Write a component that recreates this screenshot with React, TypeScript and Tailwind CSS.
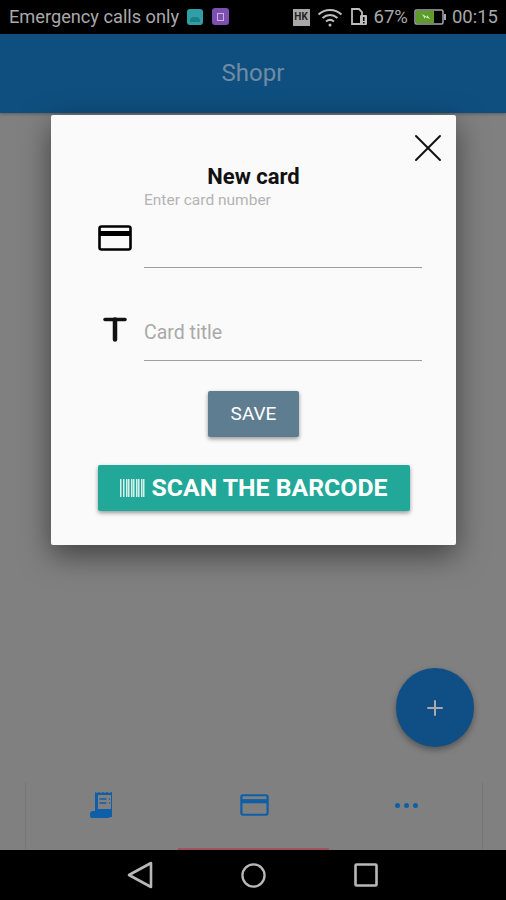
import { Plus, X } from "lucide-react";

const font = { fontFamily: "Roboto, sans-serif" };

function CardIcon({ className }: { className: string }) {
  return (
    <svg viewBox="0 0 34 26" className={className} fill="none">
      <rect x="1.5" y="1.5" width="31" height="23" rx="2" stroke="currentColor" strokeWidth="2.6" />
      <rect x="1.5" y="6" width="31" height="5" fill="currentColor" />
    </svg>
  );
}

function TitleIcon() {
  return (
    <svg viewBox="0 0 24 26" className="mb-[19px] ml-[6px] h-[26px] w-[24px] text-[#111]" fill="none">
      <path d="M2 3.500h20" stroke="currentColor" strokeWidth="3.500" strokeLinecap="round" />
      <path d="M12 3.500v20" stroke="currentColor" strokeWidth="4.500" strokeLinecap="round" />
    </svg>
  );
}

function ReceiptIcon() {
  return (
    <svg viewBox="0 0 26 28" className="h-[28px] w-[26px] text-[#0f5ea8]" fill="none">
      <path d="M6 1l2 1 2-1 2 1 2-1 2 1 2-1 2 1 3-1v25h-4v-5H6z M9 7v11h13V4H9z" fill="currentColor" fillRule="evenodd" />
      <path d="M1 23c0-2 1-3 3-3h15v4c0 2 1 3 3 3H3c-1 0-2-1-2-2z" fill="currentColor" />
      <path d="M10.500 8h7M10.500 12h7M20 8h1M20 12h1" stroke="currentColor" strokeWidth="1.600" />
    </svg>
  );
}

function BatteryIcon() {
  return (
    <svg viewBox="0 0 32 16" className="h-[16px] w-[32px]" fill="none">
      <rect x="1" y="1" width="28" height="14" rx="1.500" stroke="#a8a8a8" strokeWidth="1.500" />
      <rect x="2" y="2" width="18" height="12" fill="#5d9c28" />
      <path d="M8 5l5 3 0-2 3 4-5-2 0 2z" fill="#dfe8d4" />
      <rect x="30" y="5" width="2" height="6" fill="#a8a8a8" />
    </svg>
  );
}

function WifiIcon() {
  return (
    <svg viewBox="0 0 26 20" className="h-[20px] w-[26px]" fill="none" stroke="#bdbdbd" strokeWidth="2">
      <path d="M1.500 7.500c6.500-6 16.500-6 23 0" />
      <path d="M5.500 11c4.500-4 10.500-4 15 0" />
      <path d="M9 14.500c2.500-2 5.500-2 8 0" />
      <circle cx="13" cy="18" r="1.500" fill="#bdbdbd" stroke="none" />
    </svg>
  );
}

function SimIcon() {
  return (
    <svg viewBox="0 0 18 18" className="h-[18px] w-[18px]" fill="none">
      <path d="M2 1h7l3 3v12H2z" stroke="#bdbdbd" strokeWidth="1.800" />
      <rect x="10" y="7" width="7" height="10" rx="1" fill="#bdbdbd" />
      <rect x="13" y="9" width="1.500" height="4" fill="#000" />
      <rect x="13" y="14" width="1.500" height="1.500" fill="#000" />
    </svg>
  );
}

function StatusBar() {
  return (
    <div className="flex h-[34px] items-center justify-between bg-black pl-[9px] pr-[8px] text-[#a9a9a9]">
      <div className="flex items-center">
        <span className="text-[18.2px] leading-none">Emergency calls only</span>
        <div className="ml-[8px] flex h-[16px] w-[16px] items-end justify-center rounded-[3px] bg-[#2f9ea6]">
          <div className="mb-[3px] h-[5px] w-[10px] rounded-t-[4px] bg-[#1f7f86]" />
        </div>
        <div className="ml-[9px] flex h-[17px] w-[17px] items-center justify-center rounded-[3px] bg-[#7d4fb0]">
          <div className="h-[8px] w-[7px] border border-[#c9b3e0]" />
        </div>
      </div>
      <div className="flex items-center">
        <div className="flex h-[17px] w-[17px] items-center justify-center bg-[#a8a8a8] text-[10px] font-bold leading-none text-[#222]">
          HK
        </div>
        <div className="ml-[7px]">
          <WifiIcon />
        </div>
        <div className="ml-[7px]">
          <SimIcon />
        </div>
        <span className="ml-[6px] text-[18.5px] leading-none">67%</span>
        <div className="ml-[6px]">
          <BatteryIcon />
        </div>
        <span className="ml-[6px] text-[18.5px] leading-none">00:15</span>
      </div>
    </div>
  );
}

function Field({ icon, label, small }: { icon: React.ReactNode; label: string; small?: boolean }) {
  return (
    <div className="flex">
      <div className="flex w-[47px] items-end justify-start">{icon}</div>
      <div className="w-[278px] border-b border-[#9e9e9e]">
        {small ? (
          <div className="h-[76px] pt-[1px] text-[15.5px] leading-[16px] text-[#b4b4b4]">{label}</div>
        ) : (
          <div className="flex h-[58px] items-center pt-[3px] text-[19.5px] text-[#a9a9a9]">{label}</div>
        )}
      </div>
    </div>
  );
}

function NewCardModal() {
  return (
    <div className="absolute left-[51px] top-[81px] flex h-[430px] w-[405px] flex-col items-center rounded-[2px] bg-[#fafafa] shadow-[0_10px_30px_rgba(0,0,0,0.5)]">
      <X className="absolute right-[4px] top-[9px] h-[48px] w-[48px] text-[#111]" strokeWidth={1} />
      <h2 className="mt-[49px] text-[22px] font-bold leading-[26px] text-[#111]">New card</h2>
      <div className="mt-[1px] flex w-full flex-col gap-[34px] pl-[46px]">
        <Field
          small
          label="Enter card number"
          icon={<CardIcon className="mb-[17px] ml-[1px] h-[26px] w-[34px] text-black" />}
        />
        <Field label="Card title" icon={<TitleIcon />} />
      </div>
      <button className="mt-[30px] flex h-[46px] w-[91px] items-center justify-center rounded-[2px] bg-[#5f7d90] text-[19px] text-white shadow-[0_2px_4px_rgba(0,0,0,0.4)]">
        SAVE
      </button>
      <button className="mt-[28px] flex h-[46px] w-[312px] items-center justify-center rounded-[2px] bg-[#22a899] text-[24.8px] font-bold text-white shadow-[0_2px_4px_rgba(0,0,0,0.4)]">
        <svg viewBox="0 0 25 18" className="mr-[7px] h-[18px] w-[25px]">
          {[0, 3, 6, 8, 11, 13, 16, 18, 21, 23].map((x) => (
            <rect key={x} x={x} y="0" width="1.500" height="18" fill="#d7efeb" />
          ))}
        </svg>
        SCAN THE BARCODE
      </button>
    </div>
  );
}

function BottomNav() {
  return (
    <div className="relative ml-[25px] mr-[23px] flex h-[68px] border-x border-[#777] bg-[#808080] pt-[9px]">
      <div className="flex h-[28px] flex-1 items-center justify-center">
        <ReceiptIcon />
      </div>
      <div className="flex h-[28px] flex-1 items-center justify-center">
        <CardIcon className="h-[22px] w-[29px] text-[#0f5ea8]" />
      </div>
      <div className="flex h-[28px] flex-1 items-center justify-center gap-[4px]">
        <div className="h-[5px] w-[5px] rounded-full bg-[#0f5ea8]" />
        <div className="h-[5px] w-[5px] rounded-full bg-[#0f5ea8]" />
        <div className="h-[5px] w-[5px] rounded-full bg-[#0f5ea8]" />
      </div>
      <div className="absolute bottom-0 left-[152px] h-[2px] w-[151px] bg-[#a0525f]" />
    </div>
  );
}

function NavBar() {
  return (
    <div className="flex h-[50px] items-center justify-center gap-[88px] bg-black pr-[1px]">
      <svg viewBox="0 0 26 28" className="h-[28px] w-[26px]" fill="none">
        <path d="M24 2v24L2 14z" stroke="#b8b8b8" strokeWidth="2.600" strokeLinejoin="round" />
      </svg>
      <svg viewBox="0 0 26 26" className="h-[25px] w-[25px]" fill="none">
        <circle cx="13" cy="13" r="11.500" stroke="#b8b8b8" strokeWidth="2.400" />
      </svg>
      <svg viewBox="0 0 24 24" className="h-[24px] w-[24px]" fill="none">
        <rect x="1.500" y="1.500" width="21" height="21" rx="1" stroke="#b8b8b8" strokeWidth="2.600" />
      </svg>
    </div>
  );
}

export default function App() {
  return (
    <div className="flex h-[900px] w-[506px] flex-col overflow-hidden bg-[#808080]" style={font}>
      <StatusBar />
      <div className="relative flex flex-1 flex-col">
        <header className="flex h-[79px] items-center justify-center bg-[#0f4f7f] pb-[2px] shadow-[0_1px_3px_rgba(0,0,0,0.3)]">
          <span className="text-[24px] text-[#6e8ba3]">Shopr</span>
        </header>
        <div className="flex-1" />
        <BottomNav />
        <NewCardModal />
        <button className="absolute left-[396px] top-[634px] flex h-[79px] w-[78px] items-center justify-center rounded-full bg-[#0f4f85] shadow-[0_3px_6px_rgba(0,0,0,0.35)]">
          <Plus className="h-[24px] w-[24px] text-[#a9a9a9]" strokeWidth={2} />
        </button>
      </div>
      <NavBar />
    </div>
  );
}
